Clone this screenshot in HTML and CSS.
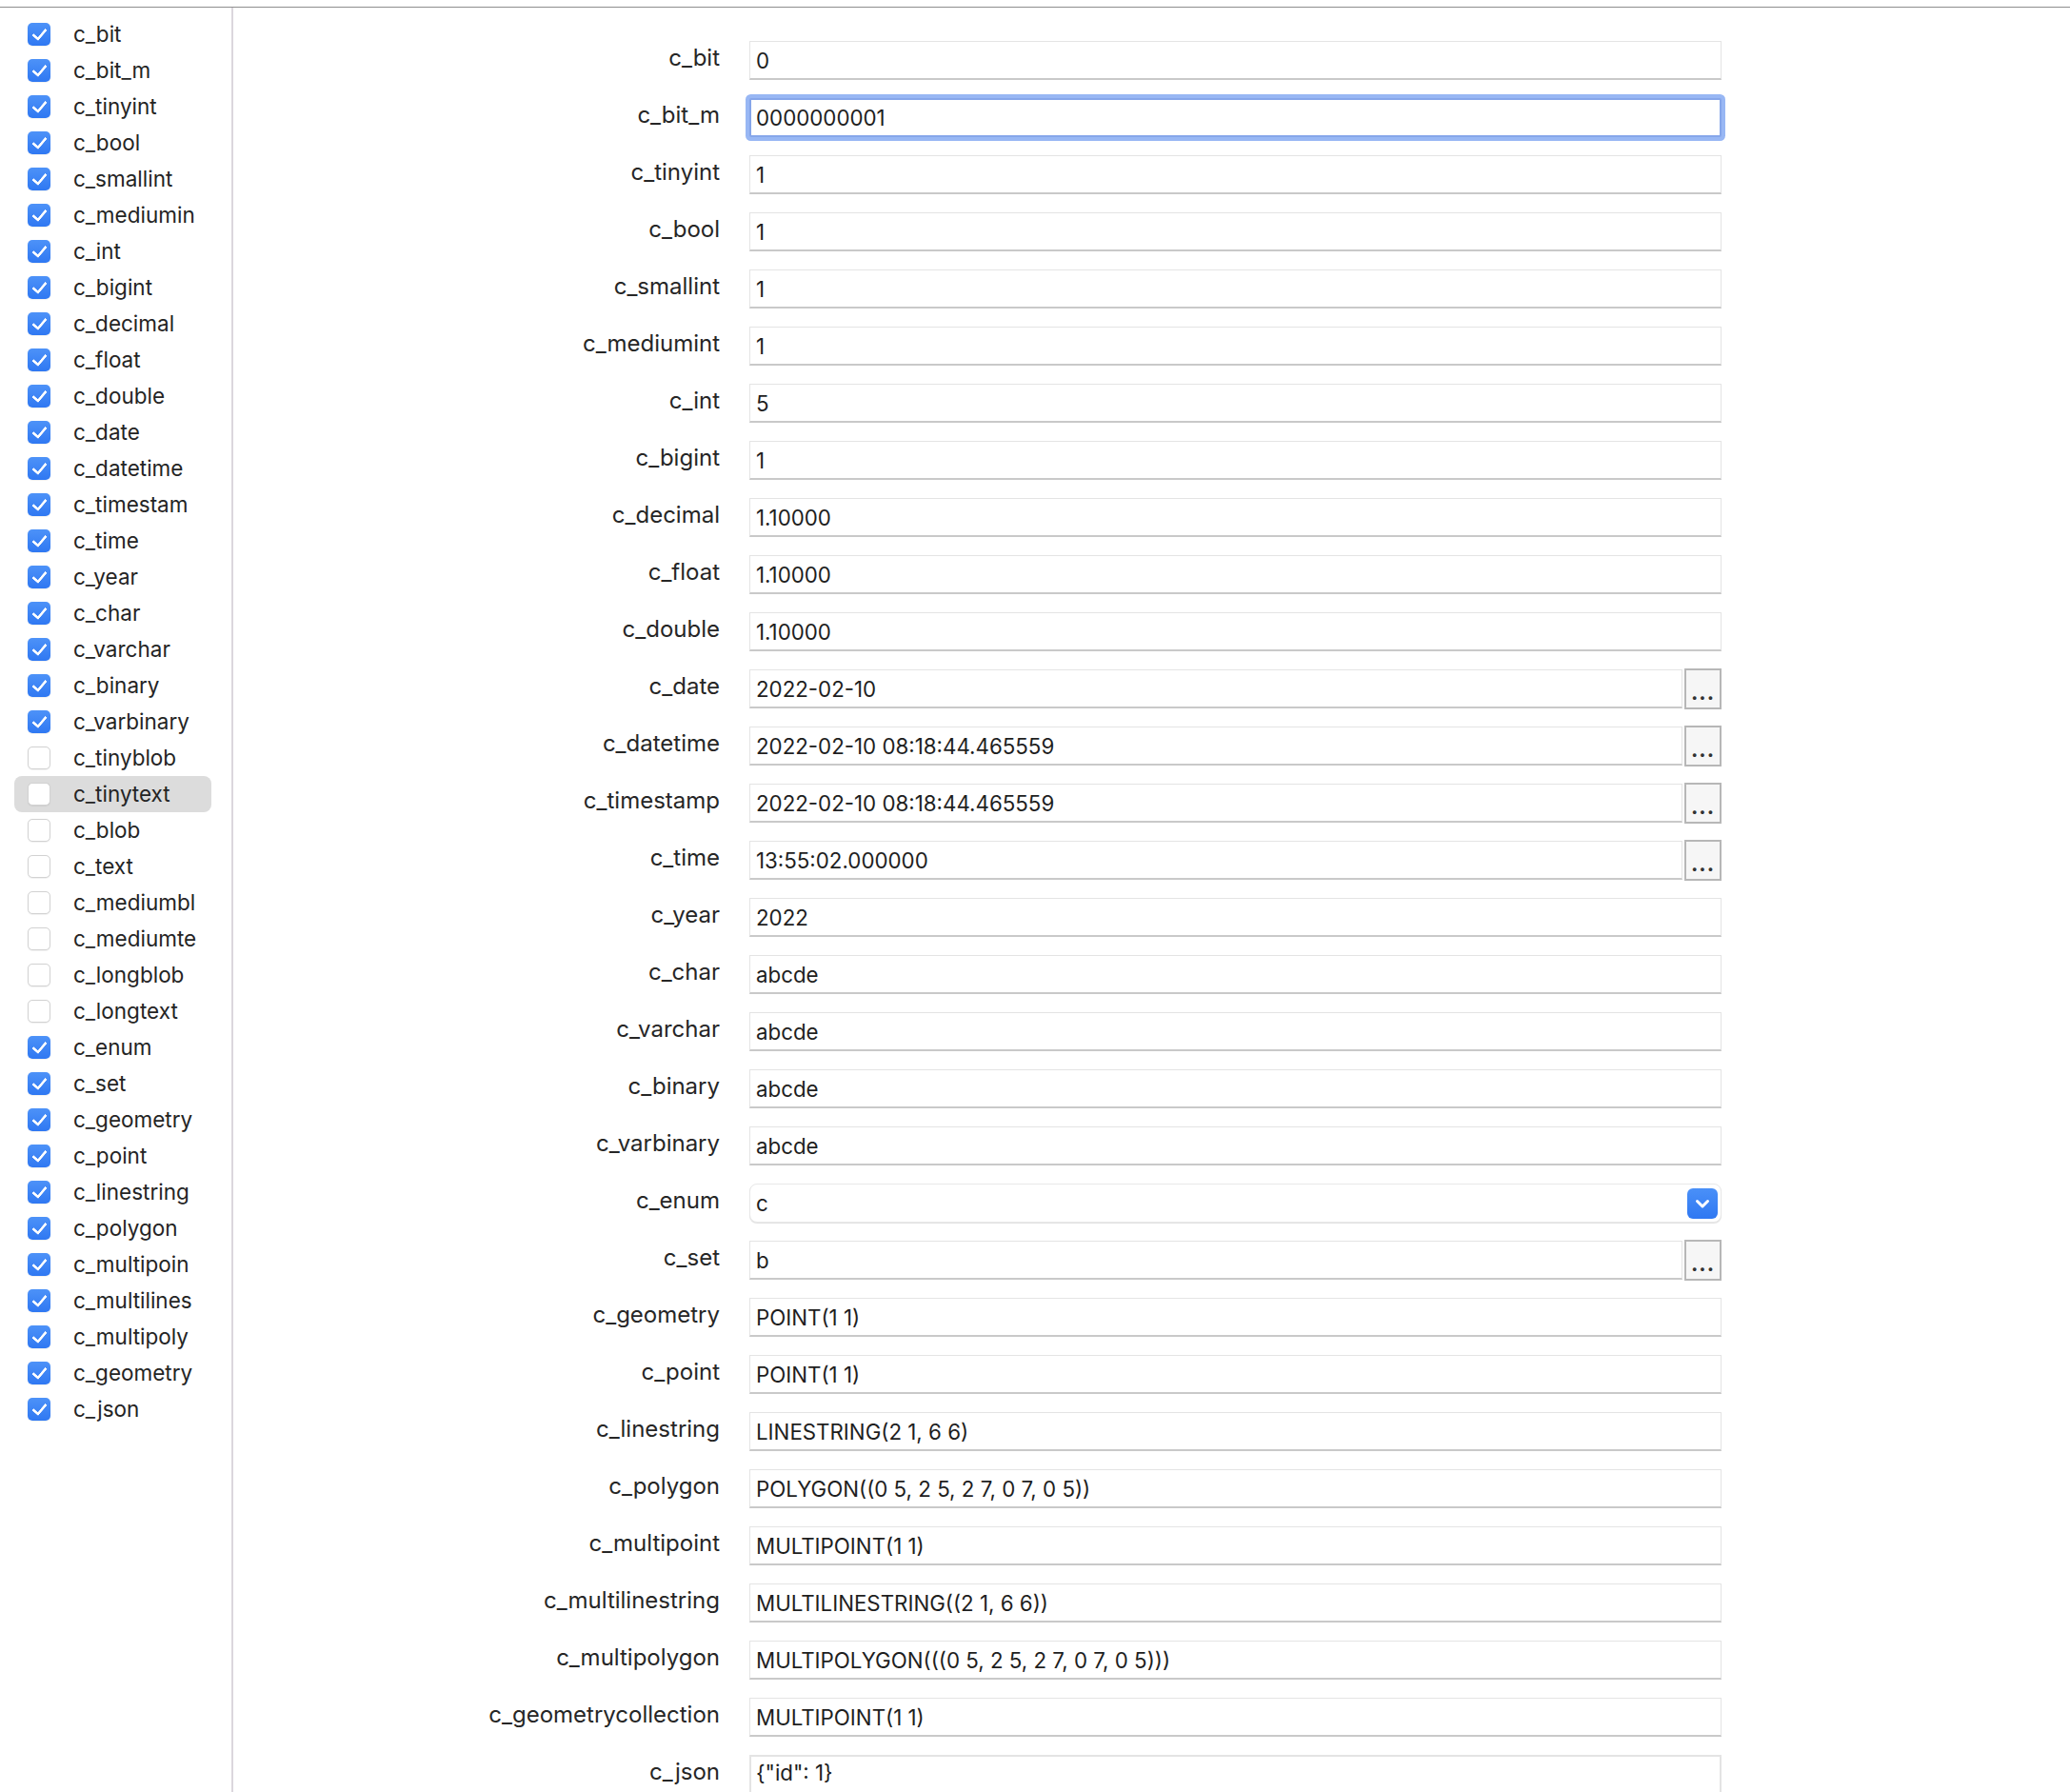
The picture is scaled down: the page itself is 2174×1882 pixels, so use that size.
FILE: index.html
```html
<!DOCTYPE html>
<html>
<head>
<meta charset="utf-8">
<link rel="stylesheet" href="styles.css">
</head>
<body>
<div class="window">
  <aside class="sidebar">
    <div class="item"><span class="cb on"></span><span class="name">c_bit</span></div>
    <div class="item"><span class="cb on"></span><span class="name">c_bit_m</span></div>
    <div class="item"><span class="cb on"></span><span class="name">c_tinyint</span></div>
    <div class="item"><span class="cb on"></span><span class="name">c_bool</span></div>
    <div class="item"><span class="cb on"></span><span class="name">c_smallint</span></div>
    <div class="item"><span class="cb on"></span><span class="name">c_mediumin</span></div>
    <div class="item"><span class="cb on"></span><span class="name">c_int</span></div>
    <div class="item"><span class="cb on"></span><span class="name">c_bigint</span></div>
    <div class="item"><span class="cb on"></span><span class="name">c_decimal</span></div>
    <div class="item"><span class="cb on"></span><span class="name">c_float</span></div>
    <div class="item"><span class="cb on"></span><span class="name">c_double</span></div>
    <div class="item"><span class="cb on"></span><span class="name">c_date</span></div>
    <div class="item"><span class="cb on"></span><span class="name">c_datetime</span></div>
    <div class="item"><span class="cb on"></span><span class="name">c_timestam</span></div>
    <div class="item"><span class="cb on"></span><span class="name">c_time</span></div>
    <div class="item"><span class="cb on"></span><span class="name">c_year</span></div>
    <div class="item"><span class="cb on"></span><span class="name">c_char</span></div>
    <div class="item"><span class="cb on"></span><span class="name">c_varchar</span></div>
    <div class="item"><span class="cb on"></span><span class="name">c_binary</span></div>
    <div class="item"><span class="cb on"></span><span class="name">c_varbinary</span></div>
    <div class="item"><span class="cb"></span><span class="name">c_tinyblob</span></div>
    <div class="item selected"><span class="cb"></span><span class="name">c_tinytext</span></div>
    <div class="item"><span class="cb"></span><span class="name">c_blob</span></div>
    <div class="item"><span class="cb"></span><span class="name">c_text</span></div>
    <div class="item"><span class="cb"></span><span class="name">c_mediumbl</span></div>
    <div class="item"><span class="cb"></span><span class="name">c_mediumte</span></div>
    <div class="item"><span class="cb"></span><span class="name">c_longblob</span></div>
    <div class="item"><span class="cb"></span><span class="name">c_longtext</span></div>
    <div class="item"><span class="cb on"></span><span class="name">c_enum</span></div>
    <div class="item"><span class="cb on"></span><span class="name">c_set</span></div>
    <div class="item"><span class="cb on"></span><span class="name">c_geometry</span></div>
    <div class="item"><span class="cb on"></span><span class="name">c_point</span></div>
    <div class="item"><span class="cb on"></span><span class="name">c_linestring</span></div>
    <div class="item"><span class="cb on"></span><span class="name">c_polygon</span></div>
    <div class="item"><span class="cb on"></span><span class="name">c_multipoin</span></div>
    <div class="item"><span class="cb on"></span><span class="name">c_multilines</span></div>
    <div class="item"><span class="cb on"></span><span class="name">c_multipoly</span></div>
    <div class="item"><span class="cb on"></span><span class="name">c_geometry</span></div>
    <div class="item"><span class="cb on"></span><span class="name">c_json</span></div>
  </aside>
  <main class="form">
    <label class="lbl">c_bit</label><div class="field">0</div>
    <label class="lbl">c_bit_m</label><div class="field focused">0000000001</div>
    <label class="lbl">c_tinyint</label><div class="field">1</div>
    <label class="lbl">c_bool</label><div class="field">1</div>
    <label class="lbl">c_smallint</label><div class="field">1</div>
    <label class="lbl">c_mediumint</label><div class="field">1</div>
    <label class="lbl">c_int</label><div class="field">5</div>
    <label class="lbl">c_bigint</label><div class="field">1</div>
    <label class="lbl">c_decimal</label><div class="field">1.10000</div>
    <label class="lbl">c_float</label><div class="field">1.10000</div>
    <label class="lbl">c_double</label><div class="field">1.10000</div>
    <label class="lbl">c_date</label><div class="combo"><div class="field">2022-02-10</div><span class="more">...</span></div>
    <label class="lbl">c_datetime</label><div class="combo"><div class="field">2022-02-10 08:18:44.465559</div><span class="more">...</span></div>
    <label class="lbl">c_timestamp</label><div class="combo"><div class="field">2022-02-10 08:18:44.465559</div><span class="more">...</span></div>
    <label class="lbl">c_time</label><div class="combo"><div class="field">13:55:02.000000</div><span class="more">...</span></div>
    <label class="lbl">c_year</label><div class="field">2022</div>
    <label class="lbl">c_char</label><div class="field">abcde</div>
    <label class="lbl">c_varchar</label><div class="field">abcde</div>
    <label class="lbl">c_binary</label><div class="field">abcde</div>
    <label class="lbl">c_varbinary</label><div class="field">abcde</div>
    <label class="lbl">c_enum</label><div class="field select"><span>c</span><span class="arrow"><svg width="32" height="32" viewBox="0 0 32 32"><path d="M10.5 13.5 L16 19 L21.5 13.5" fill="none" stroke="#fff" stroke-width="3" stroke-linecap="round" stroke-linejoin="round"/></svg></span></div>
    <label class="lbl">c_set</label><div class="combo"><div class="field">b</div><span class="more">...</span></div>
    <label class="lbl">c_geometry</label><div class="field">POINT(1 1)</div>
    <label class="lbl">c_point</label><div class="field">POINT(1 1)</div>
    <label class="lbl">c_linestring</label><div class="field">LINESTRING(2 1, 6 6)</div>
    <label class="lbl">c_polygon</label><div class="field">POLYGON((0 5, 2 5, 2 7, 0 7, 0 5))</div>
    <label class="lbl">c_multipoint</label><div class="field">MULTIPOINT(1 1)</div>
    <label class="lbl">c_multilinestring</label><div class="field">MULTILINESTRING((2 1, 6 6))</div>
    <label class="lbl">c_multipolygon</label><div class="field">MULTIPOLYGON(((0 5, 2 5, 2 7, 0 7, 0 5)))</div>
    <label class="lbl">c_geometrycollection</label><div class="field">MULTIPOINT(1 1)</div>
    <label class="lbl">c_json</label><div class="field textarea">{"id": 1}</div>
  </main>
</div>
</body>
</html>
```
FILE: styles.css
```css
html, body {
  margin: 0;
  padding: 0;
  background: #ffffff;
  height: 100%;
  overflow: hidden;
}
body {
  font-family: Inter, "Noto Sans", "Liberation Sans", sans-serif;
  color: #262626;
  padding-top: 7px;
}
.window {
  border-top: 1px solid #8e8e8e;
  display: flex;
  height: 1900px;
}
.sidebar {
  width: 245px;
  flex: none;
  border-right: 2px solid #dbd7dd;
  padding-top: 9px;
  box-sizing: border-box;
  display: flex;
  flex-direction: column;
}
.item {
  height: 38px;
  margin-left: 15px;
  width: 207px;
  padding-left: 14px;
  box-sizing: border-box;
  display: flex;
  align-items: center;
  gap: 24px;
  font-size: 22.5px;
  border-radius: 8px;
}
.item.selected {
  background: #dcdcdc;
}
.name {
  white-space: nowrap;
  color: #242424;
  position: relative;
  top: -1px;
}
.cb {
  width: 24px;
  height: 24px;
  box-sizing: border-box;
  border-radius: 5px;
  background: #fff;
  border: 1px solid #d2d2d2;
  box-shadow: 0 0.5px 1px rgba(0,0,0,0.06);
  flex: none;
  position: relative;
}
.cb.on {
  border: none;
  background: linear-gradient(#4d92f8, #2f78f2);
}
.cb.on::after {
  content: "";
  position: absolute;
  left: 8px;
  top: 3px;
  width: 6px;
  height: 12px;
  border-right: 3px solid #fff;
  border-bottom: 3px solid #fff;
  border-radius: 1px;
  transform: rotate(40deg);
}
.form {
  flex: 1;
  display: grid;
  grid-template-columns: 511px 1021px;
  grid-auto-rows: 41px;
  column-gap: 31px;
  row-gap: 19px;
  padding-top: 35px;
  align-content: start;
}
.lbl {
  text-align: right;
  font-size: 24px;
  line-height: 41px;
  white-space: nowrap;
  color: #262626;
  position: relative;
  top: -3px;
}
.field {
  box-sizing: border-box;
  height: 41px;
  border: 1px solid #e4e4e4;
  border-bottom: 2px solid #c9c9c9;
  background: #fff;
  padding: 0 6px;
  font-size: 22.3px;
  line-height: 39px;
  color: #1e1e1e;
  white-space: nowrap;
  overflow: hidden;
}
.field.focused {
  border: 2px solid #86a6ea;
  box-shadow: 0 0 0 4px #98b7f4;
  border-radius: 2px;
  line-height: 37px;
  padding-left: 5px;
}
.combo {
  display: flex;
  gap: 2px;
  height: 43px;
}
.combo .field {
  flex: 1;
}
.more {
  width: 39px;
  height: 43px;
  box-sizing: border-box;
  margin-top: -1px;
  border: 2px solid #b7b7b7;
  background: #f6f6f6;
  display: flex;
  justify-content: center;
  align-items: flex-end;
  padding-bottom: 5px;
  font-size: 22px;
  font-weight: 700;
  line-height: 1;
  letter-spacing: 1px;
  color: #333;
}
.field.select {
  border-radius: 8px;
  display: flex;
  justify-content: space-between;
  align-items: center;
  padding-right: 3px;
  border: 1px solid #e8e8e8;
  box-shadow: 0 1px 1px rgba(0,0,0,0.12);
}
.arrow {
  width: 32px;
  height: 32px;
  border-radius: 6px;
  background: linear-gradient(#4a90f8, #2f78f2);
  display: flex;
}
.field.textarea {
  height: 80px;
  border: 2px solid #e4e4e4;
  border-bottom: none;
  line-height: 1;
  padding-top: 6px;
  padding-left: 5px;
}
```
